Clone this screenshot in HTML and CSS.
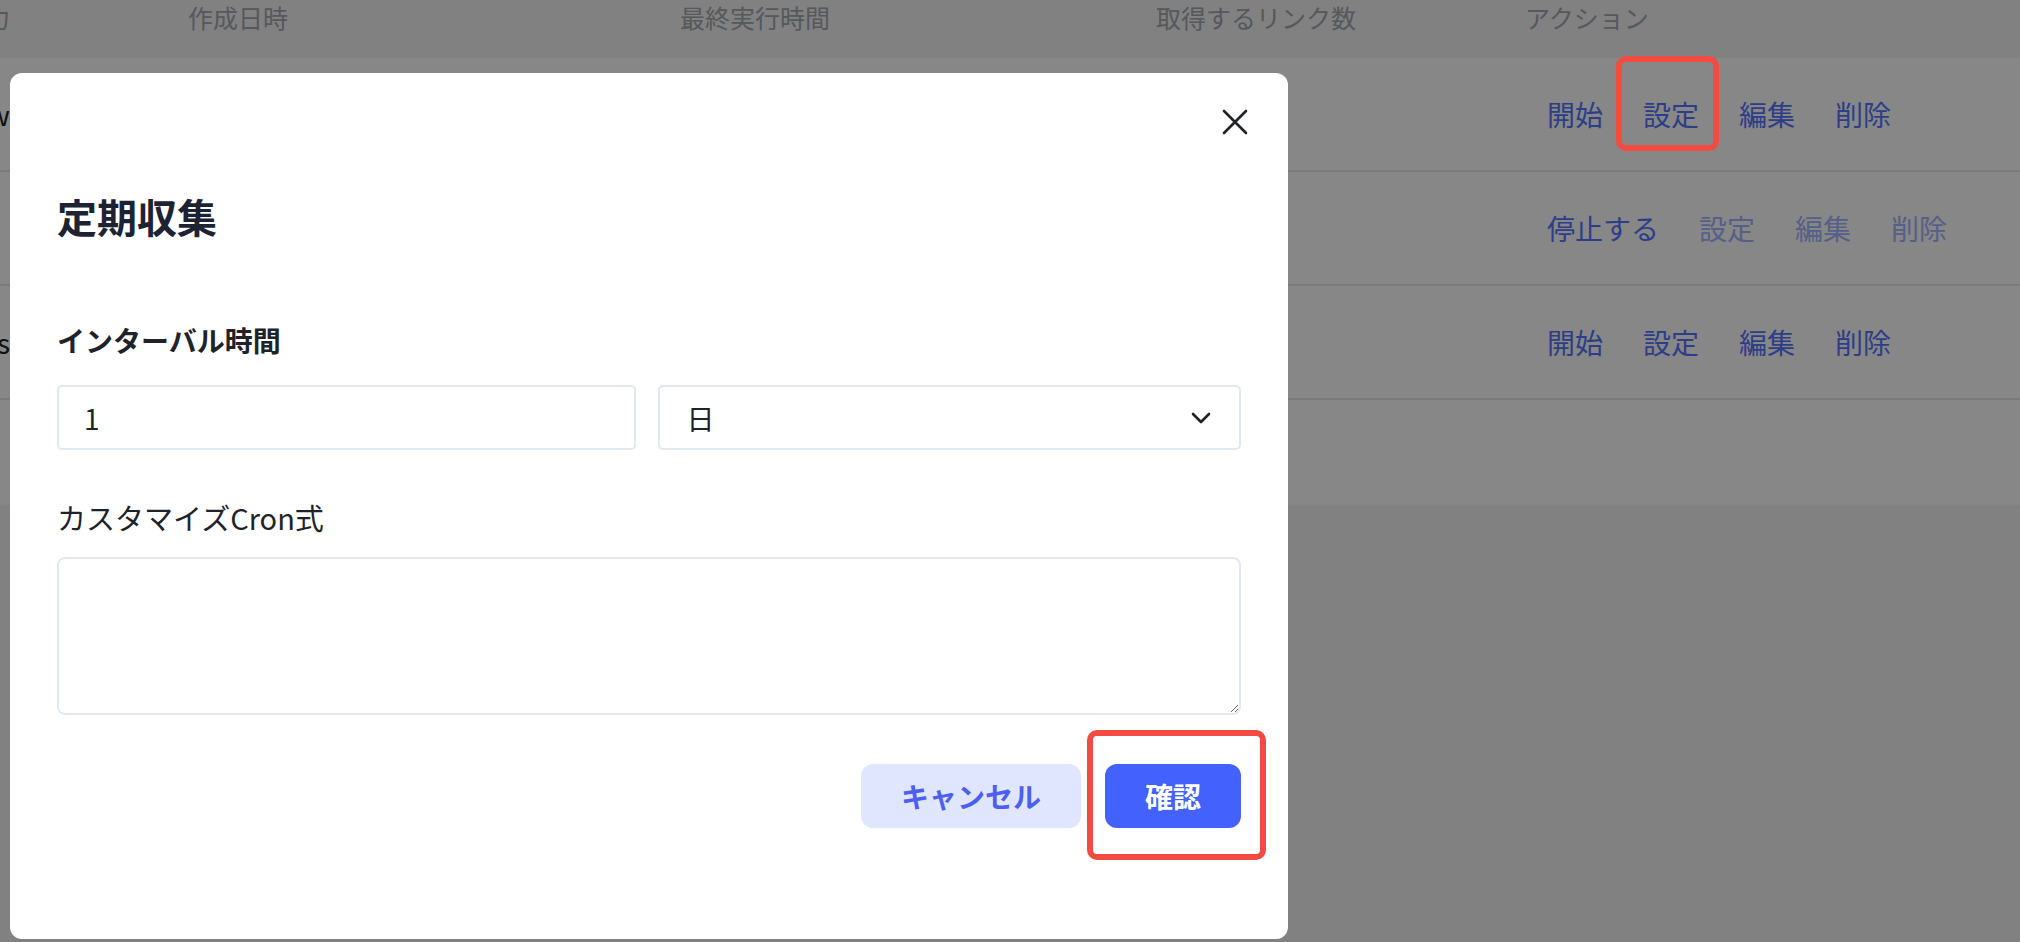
FILE: index.html
```html
<!DOCTYPE html>
<html lang="ja">
<head>
  <meta charset="UTF-8" />
  <meta name="viewport" content="width=device-width, initial-scale=1.0" />
  <title>定期収集</title>
  <link rel="stylesheet" href="styles.css">
</head>
<body>
  <div class="page">
    <div class="table-card">
      <div class="table">
        <div class="row head">
          <div class="cell">入力</div>
          <div class="cell">作成日時</div>
          <div class="cell">最終実行時間</div>
          <div class="cell">取得するリンク数</div>
          <div class="cell">アクション</div>
        </div>
        <div class="row">
          <div class="cell name"><span>Review</span></div>
          <div class="cell"></div>
          <div class="cell"></div>
          <div class="cell"></div>
          <div class="cell actions">
            <a class="link">開始</a>
            <a class="link">設定</a>
            <a class="link">編集</a>
            <a class="link">削除</a>
          </div>
        </div>
        <div class="row">
          <div class="cell name"></div>
          <div class="cell"></div>
          <div class="cell"></div>
          <div class="cell"></div>
          <div class="cell actions">
            <a class="link">停止する</a>
            <a class="link disabled">設定</a>
            <a class="link disabled">編集</a>
            <a class="link disabled">削除</a>
          </div>
        </div>
        <div class="row">
          <div class="cell name"><span>Posts</span></div>
          <div class="cell"></div>
          <div class="cell"></div>
          <div class="cell"></div>
          <div class="cell actions">
            <a class="link">開始</a>
            <a class="link">設定</a>
            <a class="link">編集</a>
            <a class="link">削除</a>
          </div>
        </div>
      </div>
    </div>
  </div>

  <div class="mask"></div>

  <div class="modal">
    <button class="modal-close" aria-label="閉じる">
      <svg width="26" height="26" viewBox="0 0 26 26">
        <path d="M2 2 L24 24 M24 2 L2 24" stroke="#1f2328" stroke-width="2.6" stroke-linecap="round" fill="none"/>
      </svg>
    </button>

    <h2 class="modal-title">定期収集</h2>

    <p class="field-label">インターバル時間</p>
    <div class="field-row">
      <input class="input" type="text" value="1" />
      <div class="select">
        <span>日</span>
        <svg width="20" height="12" viewBox="0 0 20 12">
          <path d="M2 2 L10 10 L18 2" stroke="#1f2328" stroke-width="2.6" stroke-linecap="round" stroke-linejoin="round" fill="none"/>
        </svg>
      </div>
    </div>

    <p class="field-label plain">カスタマイズCron式</p>
    <textarea class="textarea"></textarea>

    <div class="modal-footer">
      <button class="btn btn-cancel">キャンセル</button>
      <button class="btn btn-primary">確認</button>
    </div>
  </div>

  <div class="mark mark-row"></div>
  <div class="mark mark-confirm"></div>
</body>
</html>
```

FILE: styles.css
```css
body {
  margin: 0;
  width: 2020px;
  height: 942px;
  overflow: hidden;
  font-family: "Noto Sans CJK JP", "Noto Sans", sans-serif;
  background: #f3f4f6;
  color: #1f2328;
}
.page {
  margin-top: -24px;
}
.table-card {
  background: #fff;
  padding-bottom: 105px;
  overflow: hidden;
}
.table {
  margin-left: -40px;
}
.row {
  display: grid;
  grid-template-columns: 228px 492px 476px 369px 1fr;
  align-items: center;
  height: 114px;
  box-sizing: border-box;
  border-bottom: 2px solid #e5e7eb;
  font-size: 28px;
  line-height: 38px;
}
.row.head {
  height: 82px;
  background: #f3f4f6;
  border-bottom: none;
  font-size: 25px;
  line-height: 30px;
  color: #a3a6ad;
}
.cell.name {
  display: flex;
  justify-content: flex-end;
  padding-right: 178px;
  white-space: nowrap;
  overflow: hidden;
}
.cell.name span {
  flex-shrink: 0;
}
.actions {
  display: flex;
  gap: 40px;
  padding-left: 22px;
}
.link {
  color: #5576ff;
  cursor: pointer;
}
.link.disabled {
  opacity: 0.55;
}
.mask {
  position: fixed;
  inset: 0;
  background: rgba(0, 0, 0, 0.47);
}
.modal {
  position: absolute;
  left: 10px;
  top: 73px;
  width: 1278px;
  height: 866px;
  box-sizing: border-box;
  padding: 118px 47px 0;
  background: #fff;
  border-radius: 12px;
}
.modal-close {
  position: absolute;
  top: 29px;
  right: 33px;
  width: 40px;
  height: 40px;
  padding: 0;
  border: none;
  background: none;
  display: flex;
  align-items: center;
  justify-content: center;
  cursor: pointer;
}
.modal-title {
  margin: 0;
  font-size: 40px;
  line-height: 50px;
  font-weight: 700;
  color: #1d2333;
}
.field-label {
  margin: 80px 0 0;
  font-size: 28px;
  line-height: 38px;
  font-weight: 700;
  color: #1f2329;
}
.field-label.plain {
  margin-top: 48px;
  font-size: 29px;
  font-weight: 400;
}
.field-row {
  display: flex;
  gap: 22px;
  margin-top: 26px;
}
.input, .select {
  flex: 1;
  min-width: 0;
  height: 65px;
  box-sizing: border-box;
  border: 2px solid #e2e8f0;
  border-radius: 5px;
  font-family: inherit;
  font-size: 28px;
  color: #1f2328;
  background: #fff;
}
.input {
  padding: 0 25px;
  outline: none;
}
.select {
  display: flex;
  align-items: center;
  justify-content: space-between;
  padding: 0 28px 0 27px;
}
.textarea {
  display: block;
  width: 100%;
  height: 158px;
  margin-top: 21px;
  box-sizing: border-box;
  border: 2px solid #e2e8f0;
  border-radius: 8px;
  padding: 14px 25px;
  font-family: inherit;
  font-size: 28px;
  resize: vertical;
  outline: none;
}
.modal-footer {
  display: flex;
  justify-content: flex-end;
  gap: 24px;
  margin-top: 49px;
}
.btn {
  height: 64px;
  padding: 0 40px;
  border: none;
  border-radius: 12px;
  font-family: inherit;
  font-size: 28px;
  font-weight: 700;
  cursor: pointer;
}
.btn-cancel {
  background: #e0e6fe;
  color: #4d5ef2;
}
.btn-primary {
  background: #4361fd;
  color: #fff;
}
.mark {
  position: absolute;
  box-sizing: border-box;
  border: 6px solid #f34a42;
  border-radius: 10px;
}
.mark-row {
  left: 1616px;
  top: 56px;
  width: 103px;
  height: 95px;
}
.mark-confirm {
  left: 1087px;
  top: 730px;
  width: 179px;
  height: 130px;
}
```
